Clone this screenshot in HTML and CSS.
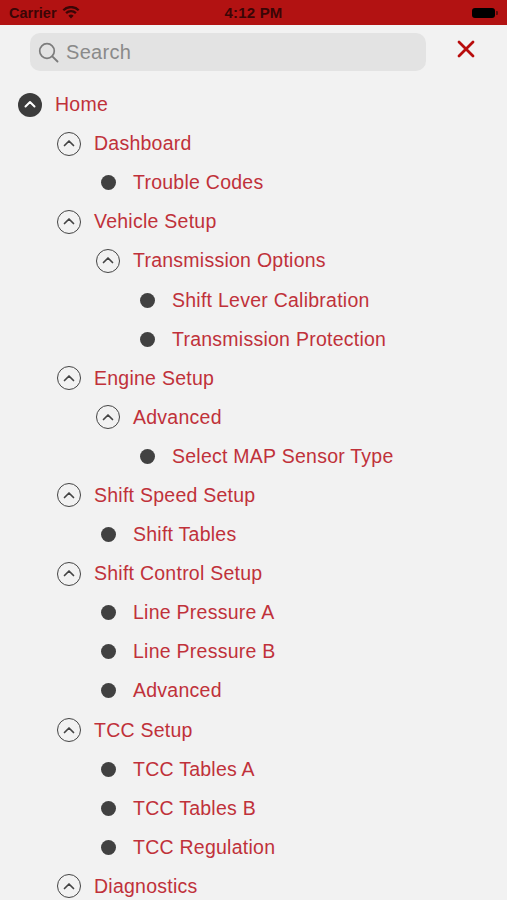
FILE: index.html
```html
<!DOCTYPE html>
<html>
<head>
<meta charset="utf-8">
<link rel="stylesheet" href="styles.css">
</head>
<body>
<div class="status">
  <div class="carrier">Carrier
    <svg class="wifi" width="18" height="13" viewBox="0 0 18 13"><path d="M9 12.5 L6.4 9.7 A3.8 3.8 0 0 1 11.6 9.7 Z" fill="#3a0606"/><path d="M4.1 7.1 A7 7 0 0 1 13.9 7.1" stroke="#3a0606" stroke-width="2.3" fill="none"/><path d="M1.3 4.2 A11 11 0 0 1 16.7 4.2" stroke="#3a0606" stroke-width="2.3" fill="none"/></svg>
  </div>
  <div class="time">4:12 PM</div>
  <div class="battery"><span class="batt-body"></span><span class="batt-tip"></span></div>
</div>
<div class="searchrow">
  <div class="search">
    <svg width="22" height="22" viewBox="0 0 22 22"><circle cx="9" cy="9" r="7.3" stroke="#7c7c7c" stroke-width="1.7" fill="none"/><line x1="14.3" y1="14.3" x2="19.5" y2="19.5" stroke="#7c7c7c" stroke-width="1.9" stroke-linecap="round"/></svg>
    <span class="placeholder">Search</span>
  </div>
  <svg class="close" width="18" height="18" viewBox="0 0 18 18"><path d="M2 2 L16 16 M16 2 L2 16" stroke="#b80c0c" stroke-width="2.8" stroke-linecap="round"/></svg>
</div>
<ul class="tree">
  <li class="row l0"><span class="icon filled"><svg width="12" height="8" viewBox="0 0 12 8"><path d="M1.5 6.5 L6 2 L10.5 6.5" stroke="#fff" stroke-width="2" fill="none" stroke-linecap="round" stroke-linejoin="round"/></svg></span>Home</li>
  <li class="row l1"><span class="icon open"><svg width="12" height="8" viewBox="0 0 12 8"><path d="M1.5 6.5 L6 2 L10.5 6.5" stroke="#444" stroke-width="1.7" fill="none" stroke-linecap="round" stroke-linejoin="round"/></svg></span>Dashboard</li>
  <li class="row l2"><span class="icon"><span class="dot"></span></span>Trouble Codes</li>
  <li class="row l1"><span class="icon open"><svg width="12" height="8" viewBox="0 0 12 8"><path d="M1.5 6.5 L6 2 L10.5 6.5" stroke="#444" stroke-width="1.7" fill="none" stroke-linecap="round" stroke-linejoin="round"/></svg></span>Vehicle Setup</li>
  <li class="row l2"><span class="icon open"><svg width="12" height="8" viewBox="0 0 12 8"><path d="M1.5 6.5 L6 2 L10.5 6.5" stroke="#444" stroke-width="1.7" fill="none" stroke-linecap="round" stroke-linejoin="round"/></svg></span>Transmission Options</li>
  <li class="row l3"><span class="icon"><span class="dot"></span></span>Shift Lever Calibration</li>
  <li class="row l3"><span class="icon"><span class="dot"></span></span>Transmission Protection</li>
  <li class="row l1"><span class="icon open"><svg width="12" height="8" viewBox="0 0 12 8"><path d="M1.5 6.5 L6 2 L10.5 6.5" stroke="#444" stroke-width="1.7" fill="none" stroke-linecap="round" stroke-linejoin="round"/></svg></span>Engine Setup</li>
  <li class="row l2"><span class="icon open"><svg width="12" height="8" viewBox="0 0 12 8"><path d="M1.5 6.5 L6 2 L10.5 6.5" stroke="#444" stroke-width="1.7" fill="none" stroke-linecap="round" stroke-linejoin="round"/></svg></span>Advanced</li>
  <li class="row l3"><span class="icon"><span class="dot"></span></span>Select MAP Sensor Type</li>
  <li class="row l1"><span class="icon open"><svg width="12" height="8" viewBox="0 0 12 8"><path d="M1.5 6.5 L6 2 L10.5 6.5" stroke="#444" stroke-width="1.7" fill="none" stroke-linecap="round" stroke-linejoin="round"/></svg></span>Shift Speed Setup</li>
  <li class="row l2"><span class="icon"><span class="dot"></span></span>Shift Tables</li>
  <li class="row l1"><span class="icon open"><svg width="12" height="8" viewBox="0 0 12 8"><path d="M1.5 6.5 L6 2 L10.5 6.5" stroke="#444" stroke-width="1.7" fill="none" stroke-linecap="round" stroke-linejoin="round"/></svg></span>Shift Control Setup</li>
  <li class="row l2"><span class="icon"><span class="dot"></span></span>Line Pressure A</li>
  <li class="row l2"><span class="icon"><span class="dot"></span></span>Line Pressure B</li>
  <li class="row l2"><span class="icon"><span class="dot"></span></span>Advanced</li>
  <li class="row l1"><span class="icon open"><svg width="12" height="8" viewBox="0 0 12 8"><path d="M1.5 6.5 L6 2 L10.5 6.5" stroke="#444" stroke-width="1.7" fill="none" stroke-linecap="round" stroke-linejoin="round"/></svg></span>TCC Setup</li>
  <li class="row l2"><span class="icon"><span class="dot"></span></span>TCC Tables A</li>
  <li class="row l2"><span class="icon"><span class="dot"></span></span>TCC Tables B</li>
  <li class="row l2"><span class="icon"><span class="dot"></span></span>TCC Regulation</li>
  <li class="row l1"><span class="icon open"><svg width="12" height="8" viewBox="0 0 12 8"><path d="M1.5 6.5 L6 2 L10.5 6.5" stroke="#444" stroke-width="1.7" fill="none" stroke-linecap="round" stroke-linejoin="round"/></svg></span>Diagnostics</li>
</ul>
</body>
</html>
```
FILE: styles.css
```css
html, body {
  margin: 0;
  padding: 0;
}
body {
  background: #f2f2f2;
  font-family: "Liberation Sans", Arial, sans-serif;
  width: 507px;
  height: 900px;
  overflow: hidden;
}
.status {
  height: 25px;
  background: #b21212;
  display: flex;
  align-items: center;
  justify-content: space-between;
  padding: 0 9px;
  color: #3a0606;
}
.carrier {
  font-size: 14.5px;
  font-weight: 600;
  display: flex;
  align-items: center;
  gap: 5px;
  width: 120px;
}
.wifi { margin-top: -1px; }
.time {
  font-size: 15px;
  font-weight: bold;
  letter-spacing: 0.2px;
}
.battery {
  width: 120px;
  display: flex;
  justify-content: flex-end;
  align-items: center;
}
.batt-body {
  width: 23px;
  height: 10px;
  background: #000;
  border-radius: 3px;
}
.batt-tip {
  width: 2px;
  height: 4px;
  background: #5a0a0a;
  margin-left: 1px;
  border-radius: 0 1px 1px 0;
}
.searchrow {
  display: flex;
  align-items: center;
  padding: 8px 0 0 30px;
  height: 38px;
}
.search {
  width: 396px;
  height: 38px;
  background: #e3e3e3;
  border-radius: 10px;
  display: flex;
  align-items: center;
  padding-left: 8px;
  box-sizing: border-box;
  gap: 6px;
}
.search svg { margin-top: 1px; }
.placeholder {
  font-size: 20px;
  color: #8a8a8a;
  letter-spacing: 0.3px;
}
.close {
  margin-left: 31px;
  margin-top: -6px;
}
.tree {
  list-style: none;
  margin: 0;
  padding: 14px 0 0 0;
}
.row {
  height: 39.1px;
  display: flex;
  align-items: center;
  font-size: 19.5px;
  letter-spacing: 0.25px;
  color: #c0313a;
}
.l0 { padding-left: 18px; }
.l1 { padding-left: 57px; }
.l2 { padding-left: 96px; }
.l3 { padding-left: 135px; }
.icon {
  width: 24px;
  height: 24px;
  margin-right: 13px;
  display: flex;
  align-items: center;
  justify-content: center;
  box-sizing: border-box;
  border-radius: 50%;
  flex: none;
}
.icon.filled {
  background: #3c3c3c;
}
.icon.open {
  border: 1.7px solid #444;
}
.icon svg { margin-top: -1px; }
.dot {
  width: 15px;
  height: 15px;
  border-radius: 50%;
  background: #414141;
}
```
